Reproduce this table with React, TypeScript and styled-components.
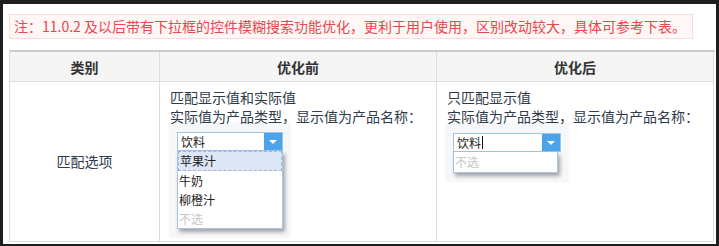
import React from "react"
import styled, { createGlobalStyle } from "styled-components"

const GlobalStyle = createGlobalStyle`
  html, body {
    margin: 0;
    padding: 0;
    background: #1e1e1e;
  }
  body {
    font-family: "Noto Sans CJK SC", "Noto Sans", sans-serif;
    color: #333;
  }
`

const Frame = styled.div`
  width: 713px;
  height: 240px;
  margin: 4px 0 0 3px;
  background: #fff;
  box-sizing: border-box;
  padding: 10px 0 0 6px;
  overflow: hidden;
`

const Note = styled.div`
  width: 684px;
  height: 25px;
  box-sizing: border-box;
  padding: 0 4px;
  border: 1px solid #fbdcdc;
  background: #fff6f6;
  color: #e5484d;
  font-size: 14px;
  line-height: 23px;
  white-space: nowrap;
`

const Grid = styled.div`
  margin-top: 11px;
  width: 705px;
  display: grid;
  grid-template-columns: 150px 277px 277px;
  border-top: 2px solid #cbcbcb;
  border-left: 1px solid #ddd;
`

const HeadCell = styled.div`
  height: 30px;
  box-sizing: border-box;
  border-right: 1px solid #ddd;
  border-bottom: 1px solid #ddd;
  background: #f5f5f5;
  display: flex;
  align-items: center;
  justify-content: center;
  font-size: 14px;
  font-weight: 700;
  color: #333;
`

const BodyCell = styled.div<{ $center?: boolean }>`
  height: 160px;
  box-sizing: border-box;
  border-right: 1px solid #ddd;
  border-bottom: 1px solid #ddd;
  padding: ${(p) => (p.$center ? "0" : "6px 10px 0")};
  display: flex;
  flex-direction: column;
  align-items: ${(p) => (p.$center ? "center" : "flex-start")};
  justify-content: ${(p) => (p.$center ? "center" : "flex-start")};
  font-size: 14px;
  line-height: 19px;
  color: #2f3a4b;
`

const Line = styled.div`
  white-space: nowrap;
`

/* grey snapshot card holding the combo box demo */
const Snapshot = styled.div<{ $w: number; $h: number; $pad: string; $shift?: number }>`
  width: ${(p) => p.$w}px;
  height: ${(p) => p.$h}px;
  box-sizing: border-box;
  margin: -2px 0 0 ${(p) => p.$shift ?? 0}px;
  padding: ${(p) => p.$pad};
  background: #f6f7f9;
  box-shadow: 0 0 3px rgba(0, 0, 0, 0.08);
`

const Combo = styled.div<{ $w: number }>`
  width: ${(p) => p.$w}px;
  height: 19px;
  box-sizing: border-box;
  border: 1px solid #9fc4e8;
  background: #fff;
  display: flex;
`

const ComboText = styled.div`
  flex: 1;
  padding-left: 3px;
  font-size: 12px;
  line-height: 17px;
  color: #222;
  display: flex;
  align-items: center;
`

const Caret = styled.span`
  display: inline-block;
  width: 1px;
  height: 13px;
  margin-left: 1px;
  background: #111;
`

const Arrow = styled.div`
  width: 18px;
  background: #4ba3ea;
  display: flex;
  align-items: center;
  justify-content: center;
`

const List = styled.div<{ $w: number }>`
  width: ${(p) => p.$w}px;
  box-sizing: border-box;
  border: 1px solid #a9c4e6;
  border-top: none;
  background: #fff;
  box-shadow: 2px 3px 4px rgba(0, 0, 0, 0.35);
`

const Item = styled.div<{ $active?: boolean; $muted?: boolean; $h: number }>`
  height: ${(p) => p.$h}px;
  box-sizing: border-box;
  padding-left: 1px;
  font-size: 12px;
  line-height: ${(p) => (p.$active ? p.$h - 2 : p.$h)}px;
  color: ${(p) => (p.$muted ? "#c6c6c6" : "#222")};
  background: ${(p) => (p.$active ? "#dde6f5" : "transparent")};
  border: ${(p) => (p.$active ? "1px dashed #9fb6d8" : "none")};
`

type DemoProps = {
  width: number
  listWidth: number
  options: string[]
  caret?: boolean
}

const ComboDemo: React.FC<DemoProps> = ({ width, listWidth, options, caret }) => (
  <>
    <Combo $w={width}>
      <ComboText>
        饮料
        {caret && <Caret />}
      </ComboText>
      <Arrow>
        <svg width="8" height="4" viewBox="0 0 8 4">
          <path d="M0 0 L8 0 L4 4 Z" fill="#fff" />
        </svg>
      </Arrow>
    </Combo>
    <List $w={listWidth}>
      {options.map((o, i) => {
        const muted = o === "不选"
        const active = i === 0 && !muted
        return (
          <Item key={o} $active={active} $muted={muted} $h={active || options.length === 1 ? 20 : 19}>
            {o}
          </Item>
        )
      })}
    </List>
  </>
)

export default function App() {
  return (
    <>
      <GlobalStyle />
      <Frame>
        <Note>注：11.0.2 及以后带有下拉框的控件模糊搜索功能优化，更利于用户使用，区别改动较大，具体可参考下表。</Note>
        <Grid>
          <HeadCell>类别</HeadCell>
          <HeadCell>优化前</HeadCell>
          <HeadCell>优化后</HeadCell>

          <BodyCell $center>匹配选项</BodyCell>

          {/* before: matches display and real values */}
          <BodyCell>
            <Line>匹配显示值和实际值</Line>
            <Line>实际值为产品类型，显示值为产品名称：</Line>
            <Snapshot $w={120} $h={113} $pad="8px 7px">
              <ComboDemo
                width={106}
                listWidth={106}
                options={["苹果汁", "牛奶", "柳橙汁", "不选"]}
              />
            </Snapshot>
          </BodyCell>

          {/* after: display value only */}
          <BodyCell>
            <Line>只匹配显示值</Line>
            <Line>实际值为产品类型，显示值为产品名称：</Line>
            <Snapshot $w={122} $h={57} $pad="9px 7px" $shift={-1}>
              <ComboDemo width={108} listWidth={105} options={["不选"]} caret />
            </Snapshot>
          </BodyCell>
        </Grid>
      </Frame>
    </>
  )
}
